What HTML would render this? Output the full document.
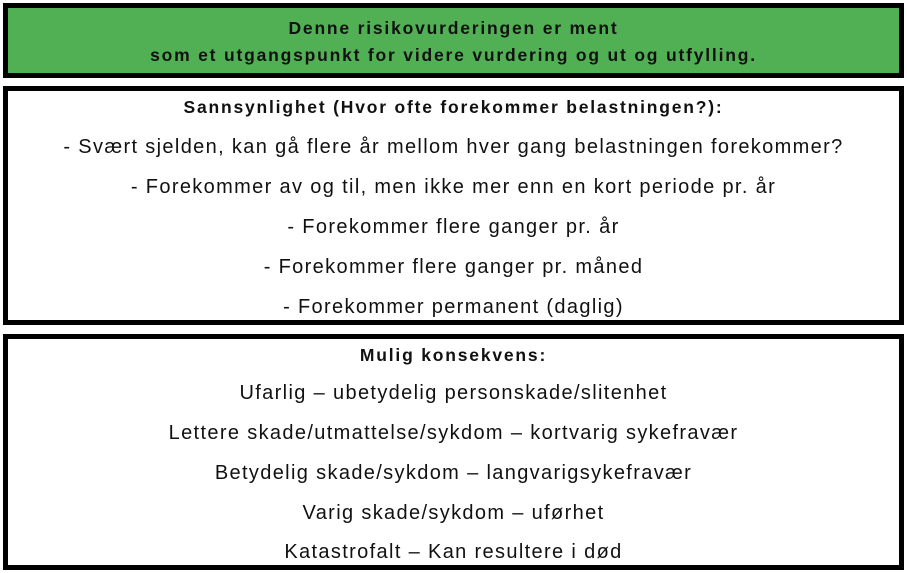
<!DOCTYPE html>
<html><head><style>
body{margin:0;width:907px;height:573px;background:#fff;font-family:"Liberation Sans",sans-serif;color:#111;position:relative;overflow:hidden}
.b{position:absolute;left:3px;width:891px;border:5px solid #000;}
.t{position:absolute;left:0;width:907px;text-align:center;white-space:nowrap;line-height:20px}
.h{font-weight:bold;font-size:17.5px;letter-spacing:1.8px}
.n{font-size:20px;letter-spacing:1.35px}
</style></head><body>
<div class="b" style="top:3px;height:65px;background:#52b054"></div>
<div class="b" style="top:86px;height:229px"></div>
<div class="b" style="top:334px;height:226px"></div>
<div class="t h" style="top:18px">Denne risikovurderingen er ment</div>
<div class="t h" style="top:45px">som et utgangspunkt for videre vurdering og ut og utfylling.</div>
<div class="t h" style="top:97px">Sannsynlighet (Hvor ofte forekommer belastningen?):</div>
<div class="t n" style="top:137px">- Svært sjelden, kan gå flere år mellom hver gang belastningen forekommer?</div>
<div class="t n" style="top:177px">- Forekommer av og til, men ikke mer enn en kort periode pr. år</div>
<div class="t n" style="top:217px">- Forekommer flere ganger pr. år</div>
<div class="t n" style="top:257px">- Forekommer flere ganger pr. måned</div>
<div class="t n" style="top:297px">- Forekommer permanent (daglig)</div>
<div class="t h" style="top:345px">Mulig konsekvens:</div>
<div class="t n" style="top:383px">Ufarlig – ubetydelig personskade/slitenhet</div>
<div class="t n" style="top:423px">Lettere skade/utmattelse/sykdom – kortvarig sykefravær</div>
<div class="t n" style="top:463px">Betydelig skade/sykdom – langvarigsykefravær</div>
<div class="t n" style="top:503px">Varig skade/sykdom – uførhet</div>
<div class="t n" style="top:542px">Katastrofalt – Kan resultere i død</div>
</body></html>
